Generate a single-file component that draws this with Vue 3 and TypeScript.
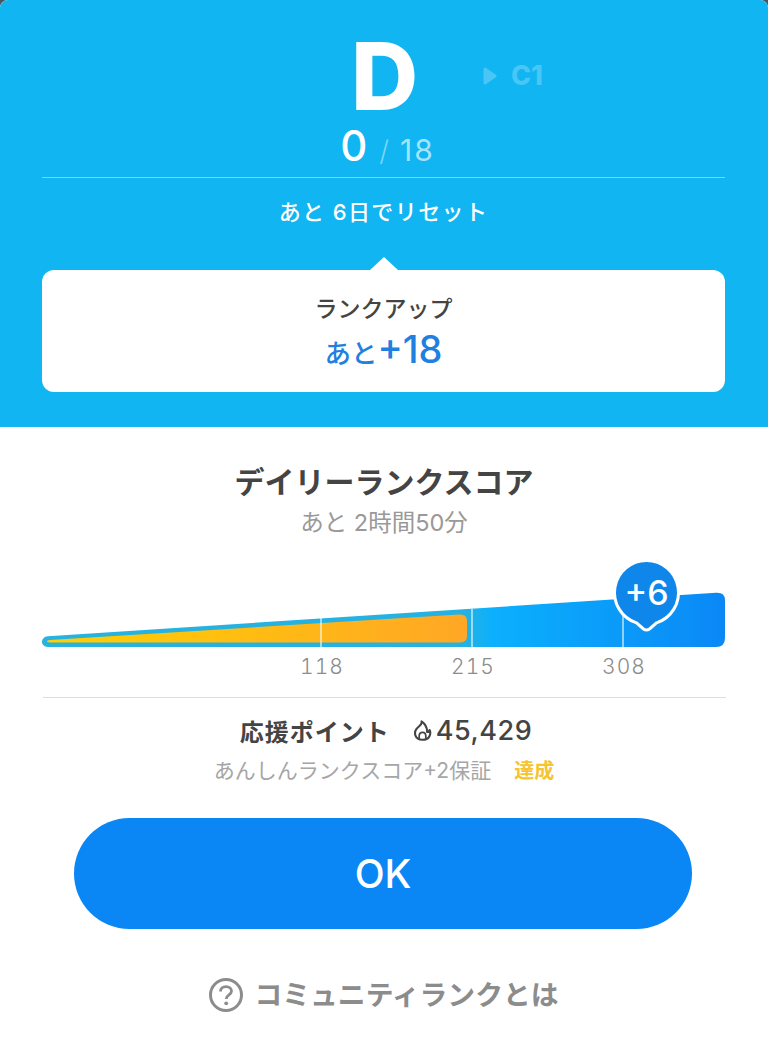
<script setup lang="ts">
const ticks = [
  { x: 321, top: 618, label: '118' },
  { x: 472, top: 609, label: '215' },
  { x: 623, top: 599, label: '308' },
];
</script>

<template>
  <main class="panel">
    <header class="hero">
      <div class="rank-row">
        <span class="rank">D</span>
        <span class="next-rank">
          <svg class="next-arrow" viewBox="0 0 14 18" aria-hidden="true">
            <path d="M2 2 12 9 2 16Z" fill="currentColor" stroke="currentColor" stroke-width="3" stroke-linejoin="round" />
          </svg>
          C1
        </span>
      </div>
      <div class="score">
        <span class="score-now">0</span>
        <span class="score-slash">/</span>
        <span class="score-max">18</span>
      </div>
      <div class="reset">あと 6日でリセット</div>
      <section class="rank-card">
        <div class="rank-card__title">ランクアップ</div>
        <div class="rank-card__value"><span class="rank-card__prefix">あと</span>+18</div>
      </section>
    </header>

    <section class="daily">
      <h1 class="daily__title">デイリーランクスコア</h1>
      <p class="daily__time">あと 2時間50分</p>

      <div class="chart">
        <svg class="chart__svg" width="768" height="115" viewBox="0 555 768 115" aria-hidden="true">
          <defs>
            <linearGradient id="barBlue" x1="0" x2="1" y1="0" y2="0">
              <stop offset="0" stop-color="#27b2df" />
              <stop offset="0.62" stop-color="#25b1e2" />
              <stop offset="0.66" stop-color="#0bb0fd" />
              <stop offset="1" stop-color="#0a88f6" />
            </linearGradient>
            <linearGradient id="barFill" x1="0" x2="1" y1="0" y2="0">
              <stop offset="0" stop-color="#ffd000" />
              <stop offset="1" stop-color="#ffa726" />
            </linearGradient>
          </defs>
          <path
            d="M48 636.2 716 592.8Q725 592.2 725 600V638Q725 647 716 647H48C40 647 40 636.7 48 636.2Z"
            fill="url(#barBlue)"
          />
          <path
            d="M50 640 459 614.6Q467 614 467 621V636Q467 642.5 460 642.5H50C46 642.5 46 640.2 50 640Z"
            fill="url(#barFill)"
          />
          <line
            v-for="tick in ticks"
            :key="tick.x"
            :x1="tick.x"
            :x2="tick.x"
            :y1="tick.top"
            y2="647"
            stroke="#fff"
            stroke-opacity="0.55"
            stroke-width="2"
          />
          <path
            d="M646.500 560.500A32 32 0 0 1 656.500 622.900L649.500 629Q646.500 631 643.500 629L636.500 622.900A32 32 0 0 1 646.500 560.500Z"
            fill="#0f86ea"
            stroke="#fff"
            stroke-width="3"
          />
          <text class="chart__bubble" x="646.500" y="605" text-anchor="middle">+6</text>
        </svg>
        <div class="chart__labels">
          <span
            v-for="tick in ticks"
            :key="tick.label"
            class="chart__label"
            :style="{ left: tick.x + 1 + 'px' }"
          >{{ tick.label }}</span>
        </div>
      </div>

      <div class="support">
        <div class="support__main">
          <span>応援ポイント</span>
          <span class="support__points">
            <svg class="flame" viewBox="0 0 20 22" aria-hidden="true">
              <path
                d="M9 1.500C10 5 6 6 3.500 9.500C1 13 1.500 20.500 9.800 20.800C17 21 19.500 15 17.500 10.500C16.800 12 15.800 12.800 14.800 12.500C15 8 12.500 4 9 1.500Z"
                fill="none"
                stroke="#444"
                stroke-width="2.200"
                stroke-linejoin="round"
              />
              <path
                d="M6.500 20V17C6.500 14.500 8 13 10 13C12 13 13.500 14.500 13.500 17V20"
                fill="none"
                stroke="#444"
                stroke-width="1.800"
              />
            </svg>
            45,429
          </span>
        </div>
        <div class="support__sub">
          <span>あんしんランクスコア+2保証</span>
          <span class="support__done">達成</span>
        </div>
      </div>

      <button type="button" class="ok">OK</button>

      <a class="about">
        <svg class="about__icon" viewBox="0 0 34 34" aria-hidden="true">
          <circle cx="17" cy="17" r="15.500" fill="none" stroke="#8c8c8c" stroke-width="3" />
          <path
            d="M11.500 13.500C11.500 10.300 14 8.700 17 8.700C20 8.700 22.500 10.500 22.500 13.300C22.500 16.800 17.200 17 17.200 21"
            fill="none"
            stroke="#8c8c8c"
            stroke-width="2.800"
          />
          <circle cx="17.200" cy="25.300" r="1.900" fill="#8c8c8c" />
        </svg>
        <span>コミュニティランクとは</span>
      </a>
    </section>
  </main>
</template>

<style scoped>
.panel {
  width: 768px;
  height: 1056px;
  overflow: hidden;
  background: #fff;
  border-radius: 8px 8px 0 0;
  font-family: Inter, "Noto Sans CJK JP", sans-serif;
  color: #444;
}

.hero {
  box-sizing: border-box;
  height: 427px;
  padding: 0 43px 0 42px;
  background: #10b5f1;
  color: #fff;
}

.rank-row {
  position: relative;
  display: flex;
  justify-content: center;
  align-items: flex-start;
  height: 124px;
}

.rank {
  margin-top: 30px;
  margin-left: 2px;
  font-size: 93px;
  font-weight: 800;
  line-height: 92px;
}

.next-rank {
  position: absolute;
  left: 441px;
  top: 58px;
  display: flex;
  align-items: center;
  gap: 14px;
  font-size: 27px;
  font-weight: 800;
  line-height: 36px;
  color: #49c6f5;
}

.next-arrow {
  width: 14px;
  height: 18px;
}

.score {
  display: flex;
  justify-content: center;
  align-items: baseline;
  height: 54px;
  padding-left: 8px;
  box-sizing: border-box;
  border-bottom: 1px solid #7ad6f8;
  line-height: 44px;
  font-weight: 500;
}

.score-now {
  font-size: 42px;
  font-weight: 500;
}

.score-slash {
  margin: 0 11px 0 12px;
  font-size: 28px;
  font-weight: 300;
  color: #7ad6f8;
}

.score-max {
  font-size: 30px;
  color: #a5e3fb;
  letter-spacing: 2px;
  font-weight: 400;
}

.reset {
  margin-top: 17px;
  height: 34px;
  font-size: 22px;
  font-weight: 500;
  line-height: 34px;
  letter-spacing: 1.400px;
  text-align: center;
}

.rank-card {
  position: relative;
  box-sizing: border-box;
  height: 122px;
  margin-top: 41px;
  padding-top: 22px;
  background: #fff;
  border-radius: 12px;
  text-align: center;
}

.rank-card::before {
  content: "";
  position: absolute;
  top: -13px;
  left: 50%;
  width: 0;
  height: 0;
  margin-left: -14px;
  border-left: 14px solid transparent;
  border-right: 14px solid transparent;
  border-bottom: 13px solid #fff;
}

.rank-card__title {
  font-size: 23px;
  font-weight: 500;
  line-height: 34px;
  color: #444;
}

.rank-card__value {
  font-size: 38px;
  font-weight: 500;
  line-height: 44px;
  margin-top: 1px;
  color: #1f80e0;
}

.rank-card__prefix {
  font-size: 26.500px;
}

.daily {
  display: flex;
  flex-direction: column;
  align-items: center;
}

.daily__title {
  margin: 34px 0 0;
  font-size: 30px;
  font-weight: 700;
  line-height: 42px;
  color: #444;
}

.daily__time {
  margin: 4px 0 0;
  font-size: 23.500px;
  font-weight: 400;
  line-height: 32px;
  color: #999;
}

.chart {
  position: relative;
  width: 768px;
  height: 142px;
  margin-top: 16px;
}

.chart__svg {
  display: block;
}

.chart__bubble {
  font-family: Inter, sans-serif;
  font-size: 34px;
  font-weight: 500;
  fill: #fff;
}

.chart__labels {
  position: absolute;
  left: 0;
  top: 99px;
  width: 100%;
}

.chart__label {
  position: absolute;
  transform: translateX(-50%);
  font-size: 21px;
  font-weight: 300;
  font-variant-numeric: tabular-nums;
  line-height: 26px;
  letter-spacing: 1px;
  color: #8c8c8c;
}

.support {
  box-sizing: border-box;
  width: 683px;
  border-top: 1px solid #dedede;
  text-align: center;
}

.support__main {
  display: flex;
  justify-content: center;
  align-items: center;
  gap: 23px;
  margin-top: 13px;
  padding-left: 4px;
  height: 38px;
  font-size: 24px;
  font-weight: 700;
  letter-spacing: 1px;
  color: #444;
}

.support__points {
  display: flex;
  align-items: center;
  gap: 4px;
  font-size: 27px;
  font-weight: 500;
  letter-spacing: 0.500px;
}

.flame {
  width: 19px;
  height: 21px;
}

.support__sub {
  display: flex;
  justify-content: center;
  gap: 23px;
  margin-top: 7px;
  font-size: 21px;
  line-height: 30px;
  color: #a6a6a6;
}

.support__done {
  font-size: 20px;
  font-weight: 700;
  color: #f6c331;
}

.ok {
  width: 618px;
  height: 111px;
  margin-top: 32px;
  margin-right: 2px;
  border: 0;
  border-radius: 56px;
  background: #0a87f5;
  color: #fff;
  font-family: inherit;
  font-size: 39px;
  font-weight: 500;
}

.about {
  display: flex;
  align-items: center;
  gap: 11px;
  margin-top: 48px;
  font-size: 27.800px;
  font-weight: 700;
  line-height: 36px;
  color: #8c8c8c;
}

.about__icon {
  width: 34px;
  height: 34px;
}
</style>

<style>
html,
body {
  background: #4a5560;
}
</style>
